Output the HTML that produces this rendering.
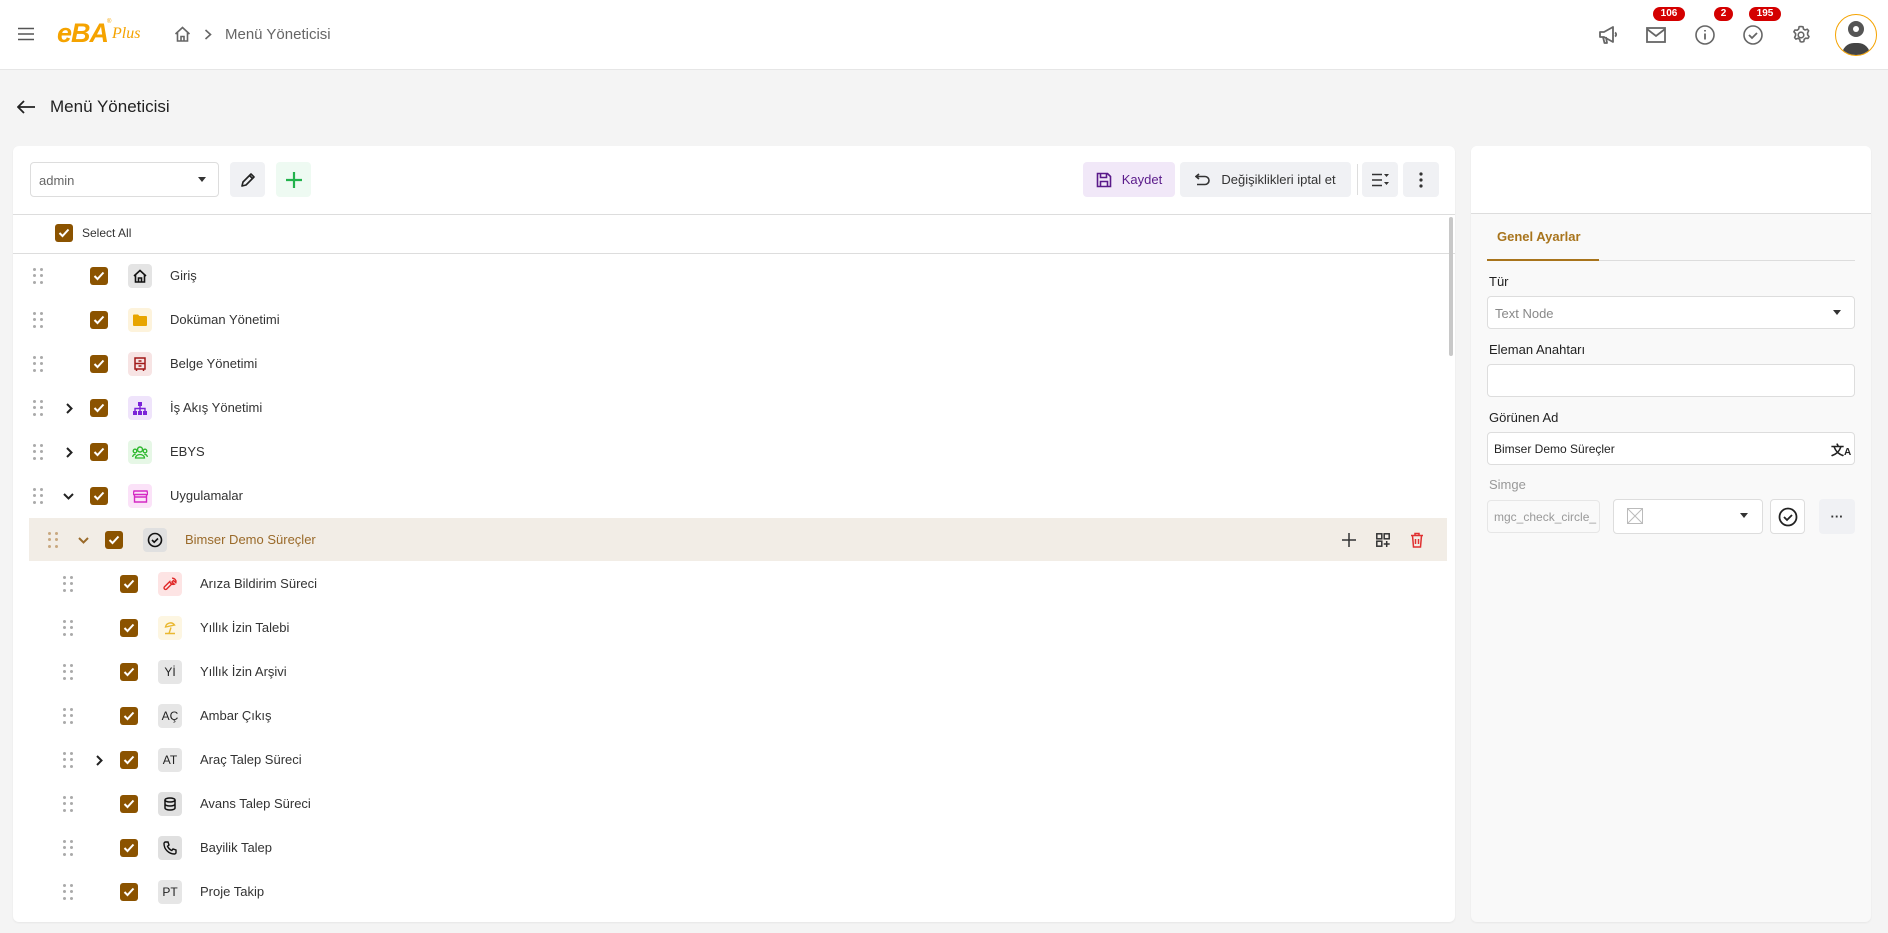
<!DOCTYPE html>
<html><head><meta charset="utf-8"><style>
*{box-sizing:border-box;margin:0;padding:0}
body{width:1888px;height:933px;background:#f4f4f4;font-family:"Liberation Sans",sans-serif;color:#222;position:relative;overflow:hidden}
.a{position:absolute}
.hdr{left:0;top:0;width:1888px;height:70px;background:#fff;border-bottom:1px solid #e6e6e6}
.card{background:#fff;border-radius:6px;box-shadow:0 1px 2px rgba(0,0,0,.06)}
.cb{width:18px;height:18px;border-radius:3px;background:#8b5300;display:flex;align-items:center;justify-content:center}
.dots{width:10px;height:16px;display:grid;grid-template-columns:3px 3px;gap:3px 4px}
.dots i{width:3px;height:3px;border-radius:50%;background:#aaa;display:block}
.ib{width:24px;height:24px;border-radius:4px;display:flex;align-items:center;justify-content:center;font-size:12px;color:#222}
.t{font-size:13px;color:#333}
.btn{border-radius:4px;background:#f0f1f4;display:flex;align-items:center;justify-content:center;font-size:13px}
.inp{border:1px solid #ddd;border-radius:4px;background:#fff}
.lbl{font-size:13px;color:#222}
.badge{background:#d40000;color:#fff;font-size:10px;font-weight:bold;border-radius:8px;height:14px;line-height:14px;text-align:center}
</style></head><body>
<div class="a hdr"></div>
<svg class="a" style="left:18px;top:27px" width="16" height="14"><path d="M0 1.5h16M0 7h16M0 12.5h16" stroke="#555" stroke-width="1.6"/></svg>
<div class="a" style="left:57px;top:18px;font:italic bold 27px 'Liberation Sans',sans-serif;color:#f5a300;letter-spacing:-1px">eBA</div>
<div class="a" style="left:107px;top:19px;font-size:6px;color:#f5a300">®</div>
<div class="a" style="left:112px;top:25px;font:italic 16px 'Liberation Serif',serif;color:#f5a300">Plus</div>
<svg class="a" style="left:174px;top:26px" width="17" height="16" viewBox="0 0 17 16"><path d="M1.5 8L8.5 1.5 15.5 8M3.5 6.5V15h10V6.5M7 15v-4.5h3V15" fill="none" stroke="#666" stroke-width="1.6"/></svg>
<svg class="a" style="left:204px;top:29px" width="8" height="11"><path d="M1.5 1l5 4.5-5 4.5" fill="none" stroke="#666" stroke-width="1.6"/></svg>
<div class="a" style="left:225px;top:26px;font-size:15px;color:#666">Menü Yöneticisi</div>
<!-- header right icons -->
<svg class="a" style="left:1598px;top:25px" width="21" height="20" viewBox="0 0 21 20"><path d="M2 7h4l9-5v15l-9-5H2z M5 12l1.5 6h2.5L8 12 M17 7.5c1.5 1 1.5 3 0 4" fill="none" stroke="#666" stroke-width="1.8" stroke-linejoin="round"/></svg>
<svg class="a" style="left:1646px;top:27px" width="20" height="16"><rect x="1" y="1" width="18" height="14" fill="none" stroke="#666" stroke-width="1.8"/><path d="M1 2l9 7 9-7" fill="none" stroke="#666" stroke-width="1.8"/></svg>
<svg class="a" style="left:1695px;top:25px" width="20" height="20"><circle cx="10" cy="10" r="9" fill="none" stroke="#666" stroke-width="1.6"/><path d="M10 8.5v6M10 5v1.5" stroke="#666" stroke-width="1.8"/></svg>
<svg class="a" style="left:1743px;top:25px" width="20" height="20"><circle cx="10" cy="10" r="9" fill="none" stroke="#666" stroke-width="1.6"/><path d="M6 10l3 3 5-5" fill="none" stroke="#666" stroke-width="1.8"/></svg>
<svg class="a" style="left:1791px;top:25px" width="20" height="20" viewBox="0 0 20 20"><path d="M10 1.5l2 .3.5 2.3 1.6.9 2.2-.8 1.3 1.6-1 2.1v1.9l1.4 1.8-1 1.8-2.3-.2-1.5 1.1-.4 2.3-2 .4-1.6-.4-.5-2.3-1.6-1-2.2.8-1.3-1.6 1-2.1V8.6L2.9 6.8l1-1.8 2.3.2L7.7 4l.4-2.3z" fill="none" stroke="#666" stroke-width="1.6" stroke-linejoin="round"/><circle cx="10" cy="10" r="2.8" fill="none" stroke="#666" stroke-width="1.6"/></svg>
<div class="a badge" style="left:1653px;top:7px;width:32px">106</div>
<div class="a badge" style="left:1714px;top:7px;width:19px">2</div>
<div class="a badge" style="left:1749px;top:7px;width:32px">195</div>
<div class="a" style="left:1835px;top:14px;width:42px;height:42px;border-radius:50%;border:1.5px solid #f5a300;background:#fff;overflow:hidden">
<div class="a" style="left:6px;top:28px;width:28px;height:16px;border-radius:12px 12px 0 0;background:#444"></div>
<div class="a" style="left:12px;top:6px;width:16px;height:16px;border-radius:50%;background:#555"></div>
<div class="a" style="left:17px;top:11px;width:6px;height:6px;border-radius:50%;background:#fff"></div>
</div>
<!-- title -->
<svg class="a" style="left:17px;top:100px" width="18" height="14"><path d="M7 1L1 7l6 6M1 7h17" fill="none" stroke="#222" stroke-width="1.8"/></svg>
<div class="a" style="left:50px;top:97px;font-size:17px;color:#222">Menü Yöneticisi</div>
<!-- left card -->
<div class="a card" style="left:13px;top:146px;width:1442px;height:776px"></div>
<div class="a inp" style="left:30px;top:162px;width:189px;height:35px"></div>
<div class="a" style="left:39px;top:173px;font-size:13px;color:#666">admin</div>
<svg class="a" style="left:198px;top:177px" width="8" height="5"><path d="M0 0h8L4 5z" fill="#333"/></svg>
<div class="a btn" style="left:230px;top:162px;width:35px;height:35px"><svg width="16" height="16" viewBox="0 0 16 16"><path d="M2 14l1-4 8-8 3 3-8 8zM9.5 3.5l3 3" fill="none" stroke="#222" stroke-width="1.6" stroke-linejoin="round"/></svg></div>
<div class="a btn" style="left:276px;top:162px;width:35px;height:35px;background:#eefaf2"><svg width="18" height="18"><path d="M9 1v16M1 9h16" stroke="#22b24c" stroke-width="2.2"/></svg></div>
<div class="a btn" style="left:1083px;top:162px;width:92px;height:35px;background:#f1e8f8;color:#5a1a8a"><svg width="16" height="16" viewBox="0 0 16 16" style="margin-right:10px"><path d="M1.5 1.5h10l3 3v10h-13z M4.5 1.5v4h6v-4 M4.5 14.5v-5h7v5" fill="none" stroke="#5a1a8a" stroke-width="1.6"/></svg>Kaydet</div>
<div class="a btn" style="left:1180px;top:162px;width:171px;height:35px;color:#333"><svg width="16" height="14" viewBox="0 0 16 14" style="margin-right:10px"><path d="M4 1L1 3.5 4 6M1 3.5h9a4 4 0 010 8H2" fill="none" stroke="#333" stroke-width="1.6"/></svg>Değişiklikleri iptal et</div>
<div class="a" style="left:1357px;top:164px;width:1px;height:31px;background:#ddd"></div>
<div class="a btn" style="left:1362px;top:162px;width:36px;height:35px"><svg width="17" height="14"><path d="M0 1.5h10M0 7h10M0 12.5h10" stroke="#333" stroke-width="1.6"/><path d="M12 1h5l-2.5 3zM12 9h5l-2.5 3z" fill="#333"/></svg></div>
<div class="a btn" style="left:1403px;top:162px;width:36px;height:35px"><svg width="4" height="16"><circle cx="2" cy="2" r="1.6" fill="#333"/><circle cx="2" cy="8" r="1.6" fill="#333"/><circle cx="2" cy="14" r="1.6" fill="#333"/></svg></div>
<div class="a" style="left:13px;top:214px;width:1442px;height:1px;background:#ddd"></div>
<div class="a cb" style="left:55px;top:224px"><svg width="12" height="10"><path d="M1.5 5l3 3 6-6.5" fill="none" stroke="#fff" stroke-width="2"/></svg></div>
<div class="a" style="left:82px;top:226px;font-size:12px;color:#333">Select All</div>
<div class="a" style="left:13px;top:253px;width:1442px;height:1px;background:#ddd"></div>
<div class="a" style="left:1449px;top:217px;width:4px;height:139px;background:#c8c8c8;border-radius:2px"></div>
<!-- highlight row -->
<div class="a" style="left:29px;top:518px;width:1418px;height:43px;background:#f2ede6"></div>
<svg class="a" style="left:1342px;top:533px" width="14" height="14"><path d="M7 0v14M0 7h14" stroke="#333" stroke-width="1.5"/></svg>
<svg class="a" style="left:1376px;top:533px" width="14" height="14"><rect x=".8" y=".8" width="5" height="5" fill="none" stroke="#333" stroke-width="1.5"/><rect x="8.2" y=".8" width="5" height="5" fill="none" stroke="#333" stroke-width="1.5"/><rect x=".8" y="8.2" width="5" height="5" fill="none" stroke="#333" stroke-width="1.5"/><path d="M10.7 8v6M7.7 11h6" stroke="#333" stroke-width="1.5"/></svg>
<svg class="a" style="left:1410px;top:532px" width="14" height="16"><path d="M1 3.5h12M5 3.5V1.5h4v2M2.5 3.5l1 11.5h7l1-11.5M5.5 7v5M8.5 7v5" fill="none" stroke="#e03030" stroke-width="1.5"/></svg>
<div id="rows"></div>
<!-- right card -->
<div class="a card" style="left:1471px;top:146px;width:400px;height:776px;background:#f9f9f9;overflow:hidden"><div style="height:68px;background:#fff;border-bottom:1px solid #ddd"></div></div>
<div class="a" style="left:1497px;top:229px;font-size:13px;font-weight:bold;color:#a8741c">Genel Ayarlar</div>
<div class="a" style="left:1487px;top:260px;width:368px;height:1px;background:#ddd"></div>
<div class="a" style="left:1487px;top:259px;width:112px;height:2px;background:#a8741c"></div>
<div class="a lbl" style="left:1489px;top:274px">Tür</div>
<div class="a inp" style="left:1487px;top:296px;width:368px;height:33px"></div>
<div class="a" style="left:1495px;top:306px;font-size:13px;color:#888">Text Node</div>
<svg class="a" style="left:1833px;top:310px" width="8" height="5"><path d="M0 0h8L4 5z" fill="#333"/></svg>
<div class="a lbl" style="left:1489px;top:342px">Eleman Anahtarı</div>
<div class="a inp" style="left:1487px;top:364px;width:368px;height:33px"></div>
<div class="a lbl" style="left:1489px;top:410px">Görünen Ad</div>
<div class="a inp" style="left:1487px;top:432px;width:368px;height:33px"></div>
<div class="a" style="left:1494px;top:442px;font-size:12px;color:#222">Bimser Demo Süreçler</div>
<div class="a" style="left:1831px;top:440px;font-size:13px;font-weight:bold;color:#222">文<span style="font-size:10px">A</span></div>
<div class="a" style="left:1489px;top:477px;font-size:13px;color:#999">Simge</div>
<div class="a inp" style="left:1487px;top:500px;width:113px;height:33px;background:#f9f9f9;border-color:#e6e6e6"></div>
<div class="a" style="left:1494px;top:510px;font-size:12px;color:#999;width:104px;overflow:hidden;white-space:nowrap">mgc_check_circle_</div>
<div class="a inp" style="left:1613px;top:499px;width:150px;height:35px"></div>
<svg class="a" style="left:1627px;top:508px" width="16" height="16"><rect x=".5" y=".5" width="15" height="15" fill="none" stroke="#bbb"/><path d="M.5 .5l15 15M15.5 .5l-15 15" stroke="#bbb"/></svg>
<svg class="a" style="left:1740px;top:513px" width="8" height="5"><path d="M0 0h8L4 5z" fill="#333"/></svg>
<div class="a inp" style="left:1770px;top:499px;width:35px;height:35px;display:flex;align-items:center;justify-content:center"><svg width="20" height="20"><circle cx="10" cy="10" r="8.5" fill="none" stroke="#222" stroke-width="1.8"/><path d="M6 10l3 3 5-5" fill="none" stroke="#222" stroke-width="1.8"/></svg></div>
<div class="a btn" style="left:1819px;top:499px;width:36px;height:35px;font-weight:bold;color:#333">···</div>
<script>
var ck='<svg width="12" height="10"><path d="M1.5 5l3 3 6-6.5" fill="none" stroke="#fff" stroke-width="2"/></svg>';
var I={
home:['#e4e4e4','<svg width="14" height="14" viewBox="0 0 14 14"><path d="M1 7L7 1.5 13 7M2.5 6v7h9V6M5.5 13V9h3v4" fill="none" stroke="#111" stroke-width="1.6"/></svg>'],
folder:['#fdf3dc','<svg width="14" height="12"><path d="M0 1.5a1 1 0 011-1h4l1.5 1.5H13a1 1 0 011 1V11a1 1 0 01-1 1H1a1 1 0 01-1-1z" fill="#e8a500"/></svg>'],
belge:['#f7e4e4','<svg width="12" height="14"><rect x="1" y="1" width="10" height="11" fill="none" stroke="#a01818" stroke-width="1.5"/><path d="M1 6.5h10M4.5 4h3M4.5 9h3M2.5 12v2M9.5 12v2" stroke="#a01818" stroke-width="1.5"/></svg>'],
flow:['#efe4fb','<svg width="14" height="13"><rect x="5" y="0" width="4" height="4" fill="#7a22d8"/><rect x="0" y="9" width="4" height="4" fill="#7a22d8"/><rect x="5" y="9" width="4" height="4" fill="#7a22d8"/><rect x="10" y="9" width="4" height="4" fill="#7a22d8"/><path d="M7 4v5M2 9V6.5h10V9" fill="none" stroke="#7a22d8" stroke-width="1.4"/></svg>'],
ebys:['#e6f7e6','<svg width="16" height="13"><circle cx="8" cy="3.5" r="2.5" fill="none" stroke="#2eb82e" stroke-width="1.4"/><circle cx="3" cy="5" r="1.8" fill="none" stroke="#2eb82e" stroke-width="1.3"/><circle cx="13" cy="5" r="1.8" fill="none" stroke="#2eb82e" stroke-width="1.3"/><path d="M3.5 12a4.5 3.5 0 019 0zM.7 11a2.5 2.5 0 013-2.5M15.3 11a2.5 2.5 0 00-3-2.5" fill="none" stroke="#2eb82e" stroke-width="1.3"/></svg>'],
app:['#fbe2f8','<svg width="15" height="13"><path d="M1 1h13l1 3.5H0zM1.5 4.5V12h12V4.5M1 7h13" fill="none" stroke="#d42ac4" stroke-width="1.4"/></svg>'],
check:['#e0e0e0','<svg width="16" height="16"><circle cx="8" cy="8" r="6.5" fill="none" stroke="#111" stroke-width="1.6"/><path d="M5 8l2.2 2.2L11 6.5" fill="none" stroke="#111" stroke-width="1.6"/></svg>'],
wrench:['#fde4e4','<svg width="14" height="14" viewBox="0 0 14 14"><path d="M9 1.2a3.5 3.5 0 013.8 4.5L10.5 3.5 9 5l2.3 2.2A3.5 3.5 0 016.8 4.5L1.5 9.8a1.5 1.5 0 002.2 2.2L9 6.8" fill="none" stroke="#e02828" stroke-width="1.4"/></svg>'],
beach:['#fdf6e2','<svg width="14" height="14"><path d="M2 12.5h10M6 12.5l2-6M2.5 6a5 5 0 019-2z" fill="none" stroke="#eab830" stroke-width="1.4"/></svg>'],
db:['#e0e0e0','<svg width="12" height="14"><ellipse cx="6" cy="3" rx="5" ry="2" fill="none" stroke="#111" stroke-width="1.5"/><path d="M1 3v8c0 1.1 2.2 2 5 2s5-.9 5-2V3M1 7c0 1.1 2.2 2 5 2s5-.9 5-2" fill="none" stroke="#111" stroke-width="1.5"/></svg>'],
phone:['#e0e0e0','<svg width="14" height="14" viewBox="0 0 14 14"><path d="M2.5 1h2.5l1 3-1.5 1.2a8 8 0 004.3 4.3L10 8l3 1v2.5A1.5 1.5 0 0111.5 13 10.5 10.5 0 011 2.5 1.5 1.5 0 012.5 1z" fill="none" stroke="#111" stroke-width="1.4"/></svg>']
};
var R=[
[0,276,'','home','Giriş'],[0,320,'','folder','Doküman Yönetimi'],[0,364,'','belge','Belge Yönetimi'],
[0,408,'r','flow','İş Akış Yönetimi'],[0,452,'r','ebys','EBYS'],[0,496,'d','app','Uygulamalar'],
[1,540,'d','check','Bimser Demo Süreçler'],
[2,584,'','wrench','Arıza Bildirim Süreci'],[2,628,'','beach','Yıllık İzin Talebi'],[2,672,'','Yİ','Yıllık İzin Arşivi'],
[2,716,'','AÇ','Ambar Çıkış'],[2,760,'r','AT','Araç Talep Süreci'],[2,804,'','db','Avans Talep Süreci'],
[2,848,'','phone','Bayilik Talep'],[2,892,'','PT','Proje Takip']];
var h='';
R.forEach(function(r){var o=r[0]*15+(r[0]==2?0:0),y=r[1];var off=r[0]==2?30:r[0]*15;
var hl=r[0]==1;
h+='<div class="a dots" style="left:'+(33+off)+'px;top:'+(y-8)+'px">'+'<i></i><i></i><i></i><i></i><i></i><i></i>'.replace(/<i><\/i>/g,hl?'<i style="background:#c9a880"></i>':'<i></i>')+'</div>';
if(r[2]=='r')h+='<svg class="a" style="left:'+(66+off)+'px;top:'+(y-5)+'px" width="7" height="11"><path d="M1 1l4.5 4.5L1 10" fill="none" stroke="#222" stroke-width="2"/></svg>';
if(r[2]=='d')h+='<svg class="a" style="left:'+(63+off)+'px;top:'+(y-3)+'px" width="11" height="7"><path d="M1 1l4.5 4.5L10 1" fill="none" stroke="'+(hl?'#9a6a2a':'#222')+'" stroke-width="2"/></svg>';
h+='<div class="a cb" style="left:'+(90+off)+'px;top:'+(y-9)+'px">'+ck+'</div>';
var ic=I[r[3]];
if(ic)h+='<div class="a ib" style="left:'+(128+off)+'px;top:'+(y-12)+'px;background:'+ic[0]+'">'+ic[1]+'</div>';
else h+='<div class="a ib" style="left:'+(128+off)+'px;top:'+(y-12)+'px;background:#e6e6e6">'+r[3]+'</div>';
h+='<div class="a t" style="left:'+(170+off)+'px;top:'+(y-8)+'px;'+(hl?'color:#9a6a2a':'')+'">'+r[4]+'</div>';
});
document.getElementById('rows').innerHTML=h;
</script>
</body></html>
